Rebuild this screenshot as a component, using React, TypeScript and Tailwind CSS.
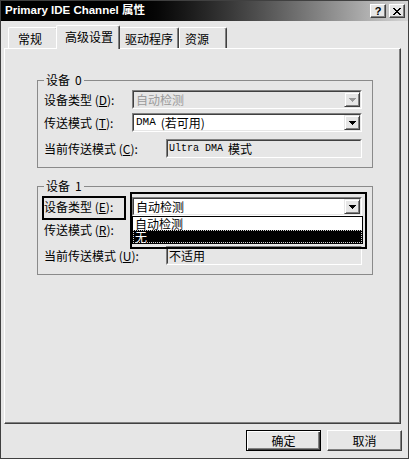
const cjk = "font-['Noto_Sans_CJK_SC',sans-serif]";

function Arrow({ disabled }: { disabled?: boolean }) {
  return (
    <div className="w-[16px] h-full shrink-0 bg-[#e6e6e6] border border-t-[#e6e6e6] border-l-[#e6e6e6] border-r-[#404040] border-b-[#404040] shadow-[inset_1px_1px_0_#fff,inset_-1px_-1px_0_#808080] flex items-center justify-center">
      <svg width="7" height="4" viewBox="0 0 7 4" shapeRendering="crispEdges">
        <path d="M0 0h7v1h-1v1h-1v1h-1v1h-1v-1h-1v-1h-1v-1h-1z" fill={disabled ? '#9a9a9a' : '#000'} />
      </svg>
    </div>
  );
}

function Sunken({ className, inner, children }: { className: string; inner: string; children?: React.ReactNode }) {
  return (
    <div className={`h-[19px] border border-t-[#808080] border-l-[#808080] border-r-white border-b-white ${className}`}>
      <div className={`h-full flex border border-t-[#404040] border-l-[#404040] border-r-[#e6e6e6] border-b-[#e6e6e6] ${inner}`}>
        {children}
      </div>
    </div>
  );
}

function Combo({ disabled, children }: { disabled?: boolean; children?: React.ReactNode }) {
  return (
    <Sunken className="w-[230px]" inner={disabled ? 'bg-[#e6e6e6]' : 'bg-white'}>
      <div className={`flex-1 pl-[2px] flex items-center text-[12px] leading-none ${disabled ? 'text-[#9a9a9a]' : 'text-black'}`}>
        {children}
      </div>
      <Arrow disabled={disabled} />
    </Sunken>
  );
}

function Field({ children }: { children?: React.ReactNode }) {
  return (
    <Sunken className="w-[196px]" inner="bg-[#e6e6e6]">
      <div className="flex-1 pl-[1px] flex items-center text-[12px] leading-none">{children}</div>
    </Sunken>
  );
}

function Label({ text, k, wide }: { text: string; k: string; wide?: boolean }) {
  return (
    <div className={`${wide ? 'w-[122px]' : 'w-[88px]'} shrink-0 text-[12px] leading-none whitespace-nowrap`}>
      {text} (<span className="underline">{k}</span>):
    </div>
  );
}

function Group({ title, num, top, pt, children }: { title: string; num: string; top: string; pt: string; children: React.ReactNode }) {
  return (
    <fieldset className={`ml-[32px] w-[336px] border border-[#8a8a8a] pl-[6px] pb-[7px] ${top} ${pt}`}>
      <legend className="px-[2px] text-[12px] leading-[14px]">
        {title}
        <span className="ml-[5px]">{num}</span>
      </legend>
      {children}
    </fieldset>
  );
}

function Tab({ label, w, pl, selected }: { label: string; w: string; pl: string; selected?: boolean }) {
  return (
    <div
      className={`${w} ${pl} rounded-t-[2px] border-l border-t border-r border-l-white border-t-white border-r-[#404040] shadow-[inset_-1px_0_0_#808080] bg-[#e6e6e6] text-[12px] leading-none ${
        selected ? 'h-[24px] mx-[-2px] mb-[-1px] relative z-10 pt-[5px]' : 'h-[21px] pt-[5px]'
      }`}
    >
      {label}
    </div>
  );
}

function Button({ label, isDefault }: { label: string; isDefault?: boolean }) {
  return (
    <div
      className={`w-[75px] h-[21px] flex items-center justify-center text-[12px] leading-none bg-[#e6e6e6] ${
        isDefault
          ? 'border border-black shadow-[inset_1px_1px_0_#fff,inset_-1px_-1px_0_#404040,inset_-2px_-2px_0_#808080]'
          : 'border border-t-white border-l-white border-r-[#404040] border-b-[#404040] shadow-[inset_-1px_-1px_0_#808080]'
      }`}
    >
      {label}
    </div>
  );
}

export default function App() {
  return (
    <div className={`w-[409px] h-[459px] bg-[#e6e6e6] border border-[#404040] text-black ${cjk} flex flex-col`}>
      {/* title bar */}
      <div className="h-[20px] shrink-0 flex items-center bg-linear-to-r from-black from-[28%] to-[#d6d6d6] pl-[4px] pr-[3px]">
        <div className="flex-1 text-white font-bold text-[11.5px] leading-none font-['Liberation_Sans','Noto_Sans_CJK_SC',sans-serif]">
          Primary IDE Channel 属性
        </div>
        <div className="flex gap-[3px]">
          <div className="w-[16px] h-[14px] bg-[#e6e6e6] border border-t-white border-l-white border-r-[#404040] border-b-[#404040] shadow-[inset_-1px_-1px_0_#808080] flex items-center justify-center text-[11px] font-bold leading-none font-['Liberation_Sans',sans-serif]">
            ?
          </div>
          <div className="w-[16px] h-[14px] bg-[#e6e6e6] border border-t-white border-l-white border-r-[#404040] border-b-[#404040] shadow-[inset_-1px_-1px_0_#808080] flex items-center justify-center">
            <svg width="8" height="7" viewBox="0 0 8 7" shapeRendering="crispEdges">
              <path d="M0 0h2v1h1v1h2v-1h1v-1h2v1h-1v1h-1v1h-1v1h1v1h1v1h1v1h-2v-1h-1v-1h-2v1h-1v1h-2v-1h1v-1h1v-1h1v-1h-1v-1h-1v-1h-1z" fill="#000" />
            </svg>
          </div>
        </div>
      </div>

      {/* tabs */}
      <div className="h-[27px] shrink-0 flex items-end pl-[7px]">
        <Tab label="常规" w="w-[50px]" pl="pl-[9px]" />
        <Tab label="高级设置" w="w-[64px]" pl="pl-[8px]" selected />
        <Tab label="驱动程序" w="w-[61px]" pl="pl-[6px]" />
        <Tab label="资源" w="w-[48px]" pl="pl-[5px]" />
      </div>

      {/* panel */}
      <div className="ml-[3px] w-[397px] h-[376px] shrink-0 border border-t-white border-l-white border-r-[#404040] border-b-[#404040] shadow-[inset_-1px_-1px_0_#808080]">
        <Group title="设备" num="0" top="mt-[24px]" pt="pt-[1px]">
          <div className="h-[23px] flex items-center">
            <Label text="设备类型" k="D" />
            <Combo disabled>自动检测</Combo>
          </div>
          <div className="h-[23px] flex items-center">
            <Label text="传送模式" k="T" />
            <Combo>
              <span className="font-['Liberation_Mono',monospace] text-[11px]">DMA</span>
              <span className="ml-[5px]">(若可用)</span>
            </Combo>
          </div>
          <div className="h-[23px] mt-[3px] flex items-center">
            <Label text="当前传送模式" k="C" wide />
            <Field>
              <span className="font-['Liberation_Mono',monospace] text-[10px]">Ultra DMA</span>
              <span className="ml-[5px]">模式</span>
            </Field>
          </div>
        </Group>

        <Group title="设备" num="1" top="mt-[11px]" pt="pt-[2px]">
          <div className="h-[23px] flex items-center relative">
            <Label text="设备类型" k="E" />
            <Combo>自动检测</Combo>
            {/* highlight frames */}
            <div className="absolute left-[-2px] top-[1px] w-[84px] h-[24px] border-2 border-black" />
            <div className="absolute left-[86px] top-[-3px] w-[237px] h-[57px] border-2 border-black z-20" />
            {/* open list */}
            <div className="absolute left-[88px] top-[21px] w-[231px] border border-black bg-white z-10 text-[12px] leading-[13px]">
              <div className="h-[13px] pl-[2px]">自动检测</div>
              <div className="h-[13px] pl-[2px] bg-black text-white outline-1 outline-dotted outline-[#cfcfcf] -outline-offset-1">无</div>
            </div>
          </div>
          <div className="h-[23px] flex items-center">
            <Label text="传送模式" k="R" />
          </div>
          <div className="h-[23px] mt-[3px] flex items-center">
            <Label text="当前传送模式" k="U" wide />
            <Field>不适用</Field>
          </div>
        </Group>
      </div>

      {/* buttons */}
      <div className="mt-[6px] flex justify-end gap-[6px] pr-[6px]">
        <Button label="确定" isDefault />
        <Button label="取消" />
      </div>
    </div>
  );
}
